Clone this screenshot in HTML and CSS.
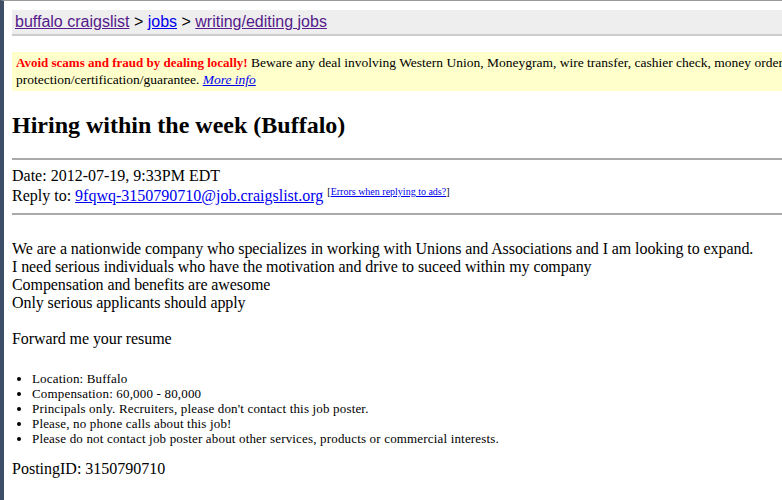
FILE: index.html
```html
<!DOCTYPE html>
<html lang="en">
<head>
    <meta charset="UTF-8">
    <title>Hiring within the week (Buffalo)</title>
    <link rel="stylesheet" href="styles.css">
</head>
<body>
    <div class="page">
        <div class="bchead">
            <a href="#" class="visited">buffalo craigslist</a> &gt;
            <a href="#">jobs</a> &gt;
            <a href="#" class="visited">writing/editing jobs</a>
        </div>

        <div class="warning">
            <b>Avoid scams and fraud by dealing locally!</b> Beware any deal involving Western Union, Moneygram, wire transfer, cashier check, money order, shipping, escrow, or any promise of transaction protection/certification/guarantee. <a href="#">More info</a>
        </div>

        <h2>Hiring within the week (Buffalo)</h2>
        <hr>
        <div class="meta">
            Date: 2012-07-19, 9:33PM EDT<br>
            Reply to: <a href="#">9fqwq-3150790710@job.craigslist.org</a> <sup class="errors">[<a href="#">Errors when replying to ads?</a>]</sup>
        </div>
        <hr>

        <div id="userbody">
            <p>We are a nationwide company who specializes in working with Unions and Associations and I am looking to expand.<br>
            I need serious individuals who have the motivation and drive to suceed within my company<br>
            Compensation and benefits are awesome<br>
            Only serious applicants should apply</p>
            <p>Forward me your resume</p>

            <ul class="blurbs">
                <li>Location: Buffalo</li>
                <li>Compensation: 60,000 - 80,000</li>
                <li>Principals only. Recruiters, please don't contact this job poster.</li>
                <li>Please, no phone calls about this job!</li>
                <li>Please do not contact job poster about other services, products or commercial interests.</li>
            </ul>
        </div>

        <div class="posting-id">PostingID: 3150790710</div>
    </div>
</body>
</html>
```

FILE: styles.css
```css
html {
    overflow: hidden;
}

body {
    margin: 0;
    background-color: #fff;
    border-left: 4px solid #3d4e66;
    border-top: 1px solid #999;
    font-family: "Liberation Serif", "Times New Roman", serif;
    font-size: 16px;
    color: #000;
    min-height: 499px;
}

.page {
    width: 1110px;
    padding: 9px 8px 0 8px;
}

a {
    color: #0000ee;
}

a.visited {
    color: #551a8b;
}

.bchead {
    background-color: #eee;
    border-bottom: 2px solid #ccc;
    font-family: "Liberation Sans", Arial, sans-serif;
    font-size: 16px;
    padding: 2px 3px 2px 3px;
    line-height: 20px;
}

.warning {
    margin-top: 16px;
    background-color: #ffc;
    font-size: 13.5px;
    line-height: 17px;
    padding: 2px 4px 3px 4px;
}

.warning b {
    color: #f00;
    font-size: 13px;
}

.warning a {
    font-style: italic;
}

h2 {
    font-size: 24px;
    margin: 21px 0 19px 0;
}

hr {
    border: none;
    border-top: 2px solid #aaa;
    margin: 0;
}

.meta {
    padding: 6px 0 7px 0;
    line-height: 20px;
}

.errors {
    font-size: 10px;
    vertical-align: top;
    line-height: 1;
    position: relative;
    top: 1px;
}

#userbody p {
    margin: 25px 0 0 0;
    line-height: 18px;
    letter-spacing: -0.08px;
}

#userbody p + p {
    margin-top: 18px;
}

.blurbs {
    font-size: 13px;
    line-height: 15px;
    letter-spacing: 0.17px;
    margin: 23px 0 0 0;
    padding-left: 20px;
}

.posting-id {
    margin-top: 14px;
}
```
